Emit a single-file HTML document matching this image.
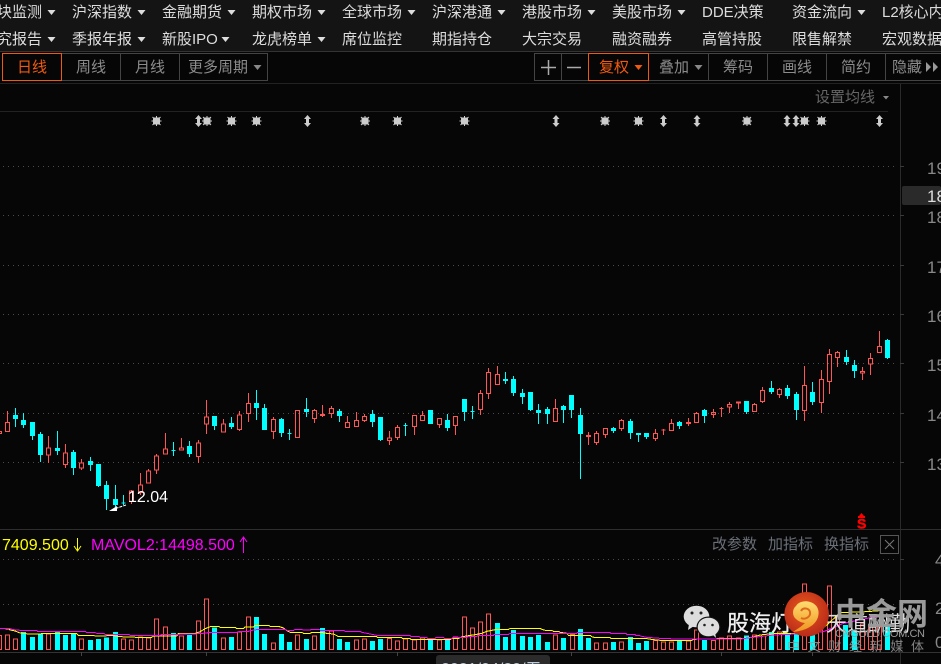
<!DOCTYPE html>
<html><head><meta charset="utf-8"><title>K线</title>
<style>
html,body{margin:0;padding:0;background:#060606}
#p{position:relative;width:941px;height:664px;overflow:hidden;background:#060606;font-family:"Liberation Sans","Noto Sans CJK SC",sans-serif}
#p div{position:absolute;white-space:nowrap}
.m{font-size:15px;color:#ddd;line-height:26px;height:26px}
.b{top:53px;height:28px;line-height:27px;font-size:15px;color:#8c8c8c;box-sizing:border-box;border:1px solid #444;text-align:center;margin-right:-1px}
.o{border-color:#f05a10;color:#f05a10;z-index:2}
svg{position:absolute;left:0;top:0}
</style></head><body><div id="p">
<div style="left:0;top:0;width:941px;height:51px;background:#141414"></div>
<div style="left:0;top:51px;width:941px;height:1px;background:#333"></div>
<div style="left:0;top:83px;width:941px;height:1px;background:#222"></div>

<div class="m" style="left:-18px;top:0">板块监测</div><div class="m" style="left:72px;top:0">沪深指数</div><div class="m" style="left:162px;top:0">金融期货</div><div class="m" style="left:252px;top:0">期权市场</div><div class="m" style="left:342px;top:0">全球市场</div><div class="m" style="left:432px;top:0">沪深港通</div><div class="m" style="left:522px;top:0">港股市场</div><div class="m" style="left:612px;top:0">美股市场</div><div class="m" style="left:702px;top:0">DDE决策</div><div class="m" style="left:792px;top:0">资金流向</div><div class="m" style="left:882px;top:0">L2核心内参</div>
<div class="m" style="left:-18px;top:27px">研究报告</div><div class="m" style="left:72px;top:27px">季报年报</div><div class="m" style="left:162px;top:27px">新股IPO</div><div class="m" style="left:252px;top:27px">龙虎榜单</div><div class="m" style="left:342px;top:27px">席位监控</div><div class="m" style="left:432px;top:27px">期指持仓</div><div class="m" style="left:522px;top:27px">大宗交易</div><div class="m" style="left:612px;top:27px">融资融券</div><div class="m" style="left:702px;top:27px">高管持股</div><div class="m" style="left:792px;top:27px">限售解禁</div><div class="m" style="left:882px;top:27px">宏观数据</div>

<div class="b o" style="left:2px;width:60px">日线</div><div class="b" style="left:61px;width:60px">周线</div><div class="b" style="left:120px;width:60px">月线</div><div class="b" style="left:179px;width:89px;text-align:left;padding-left:8px">更多周期</div>
<div class="b" style="left:534px;width:28px"></div><div class="b" style="left:561px;width:28px"></div><div class="b o" style="left:588px;width:61px;text-align:left;padding-left:10px">复权</div><div class="b" style="left:648px;width:61px;text-align:left;padding-left:10px">叠加</div><div class="b" style="left:708px;width:60px">筹码</div><div class="b" style="left:767px;width:60px">画线</div><div class="b" style="left:826px;width:60px">简约</div><div class="b" style="left:885px;width:70px;text-align:left;padding-left:6px">隐藏</div>

<div style="left:815px;top:85px;font-size:15px;line-height:26px;color:#666">设置均线</div>
<div style="left:0;top:111px;width:888px;height:1px;background:#222"></div>
<div style="left:0;top:529px;width:941px;height:1px;background:#2e2e2e"></div>
<div style="left:0;top:652px;width:941px;height:1px;background:#333"></div>

<svg width="941" height="664" viewBox="0 0 941 664">
<defs>
<radialGradient id="lg" cx=".45" cy=".4" r=".65"><stop offset="0" stop-color="#ea5a1c"/><stop offset="1" stop-color="#b5261a"/></radialGradient>
<linearGradient id="ly" x1="0" y1="0" x2="0" y2="1"><stop offset="0" stop-color="#ffdc70"/><stop offset="1" stop-color="#f0941f"/></linearGradient>
</defs>
<!-- arrows -->
<path fill="#ddd" d="M137.500 10h8l-4 5zM227.500 10h8l-4 5zM317.500 10h8l-4 5zM407.500 10h8l-4 5zM497.500 10h8l-4 5zM587.500 10h8l-4 5zM677.500 10h8l-4 5zM857.500 10h8l-4 5zM47.500 10h8l-4 5zM47.500 37h8l-4 5zM137.500 37h8l-4 5zM221.500 37h8l-4 5zM317.500 37h8l-4 5z"/>
<path fill="#888" d="M253.500 65h8l-4 5zM694.500 65h8l-4 5zM883 96h6l-3 3.500z"/>
<path fill="#f05a10" d="M634.500 65h8l-4 5z"/>
<path fill="#999" d="M926 62l5 5-5 5zM933 62l5 5-5 5z"/>
<path stroke="#aaa" stroke-width="1.500" fill="none" d="M541 67.500h15M548.500 60v15M567 67.500h14"/>
<!-- axis -->
<path stroke="#2a2a2a" fill="none" d="M900.500 84V664"/>
<path stroke="#3a3a3a" fill="none" d="M900 166.500h4M900 215.500h4M900 265.500h4M900 314.500h4M900 363.500h4M900 413.500h4M900 462.500h4M900 559.500h4M900 604.500h4"/>
<rect x="902" y="186" width="39" height="19" rx="2" fill="#2a2a2a"/>
<g font-family="Liberation Sans" font-size="17" fill="#888">
<text x="927" y="174">19</text><text x="927" y="202" fill="#ddd">18</text><text x="927" y="223">18</text><text x="927" y="273">17</text><text x="927" y="322">16</text><text x="927" y="371">15</text><text x="927" y="421">14</text><text x="927" y="470">13</text><text x="935" y="566">4</text><text x="935" y="614">2</text><text x="935" y="648">0</text>
</g>
<!-- dotted grid -->
<path stroke="#4a4a4a" fill="none" stroke-dasharray="1 4" d="M3 166.500H897M3 215.500H897M3 265.500H897M3 314.500H897M3 363.500H897M3 413.500H897M3 462.500H897M3 559.500H897M3 604.500H897"/>
<!-- markers -->
<path fill="#ccc" stroke="#ccc" stroke-width="1" d="M151.500 121h10M156.500 116v10M152.500 117l8 8M152.500 125l8-8M153.500 118h6v6h-6zM202 121h10M207 116v10M203 117l8 8M203 125l8-8M204 118h6v6h-6zM226.500 121h10M231.500 116v10M227.500 117l8 8M227.500 125l8-8M228.500 118h6v6h-6zM251.500 121h10M256.500 116v10M252.500 117l8 8M252.500 125l8-8M253.500 118h6v6h-6zM360 121h10M365 116v10M361 117l8 8M361 125l8-8M362 118h6v6h-6zM392.500 121h10M397.500 116v10M393.500 117l8 8M393.500 125l8-8M394.500 118h6v6h-6zM459.500 121h10M464.500 116v10M460.500 117l8 8M460.500 125l8-8M461.500 118h6v6h-6zM600 121h10M605 116v10M601 117l8 8M601 125l8-8M602 118h6v6h-6zM633.500 121h10M638.500 116v10M634.500 117l8 8M634.500 125l8-8M635.500 118h6v6h-6zM742 121h10M747 116v10M743 117l8 8M743 125l8-8M744 118h6v6h-6zM799.500 121h10M804.500 116v10M800.500 117l8 8M800.500 125l8-8M801.500 118h6v6h-6zM816.500 121h10M821.500 116v10M817.500 117l8 8M817.500 125l8-8M818.500 118h6v6h-6z"/>
<path fill="#ccc" d="M198.500 115l3.500 4h-2v4h2l-3.500 4l-3.500-4h2v-4h-2zM307.500 115l3.500 4h-2v4h2l-3.500 4l-3.500-4h2v-4h-2zM556 115l3.500 4h-2v4h2l-3.500 4l-3.500-4h2v-4h-2zM663.500 115l3.500 4h-2v4h2l-3.500 4l-3.500-4h2v-4h-2zM697 115l3.500 4h-2v4h2l-3.500 4l-3.500-4h2v-4h-2zM787 115l3.500 4h-2v4h2l-3.500 4l-3.500-4h2v-4h-2zM796 115l3.500 4h-2v4h2l-3.500 4l-3.500-4h2v-4h-2zM879.500 115l3.500 4h-2v4h2l-3.500 4l-3.500-4h2v-4h-2z"/>

<!-- candles -->
<g shape-rendering="crispEdges" stroke-width="3">
<g transform="translate(.167 380) scale(.33333)">
<path fill="none" stroke="#f55" d="M-8 154.500h12V160.500h-12zM22 93V126M16 127.500h12V154.500h-12zM145 168V202M145 227V249M139 203.500h12V225.500h-12zM196 192V217M196 255V264M190 218.500h12V253.500h-12zM244 237V247M244 266V270M238 248.500h12V264.500h-12zM394 330V331M394 366V372M388 332.500h12V364.500h-12zM421 279V313M421 339V345M415 314.500h12V337.500h-12zM445 267V271M439 272.500h12V309.500h-12zM469 222V226M469 272V282M463 227.500h12V270.500h-12zM496 159V205M490 206.500h12V222.500h-12zM544 174V203M538 204.500h12V210.500h-12zM595 180V187M595 231V249M589 188.500h12V229.500h-12zM619 60V109M619 134V162M613 110.500h12V132.500h-12zM670 117V130M664 131.500h12V156.500h-12zM718 93V103M718 150V153M712 104.500h12V148.500h-12z"/>
<path fill="#0ff" stroke="#0ff" d="M46 84V141M40 106.500h12V115.500h-12zM70 99V144M64 121.500h12V133.500h-12zM97 126V180M91 127.500h12V166.500h-12zM121 156V246M115 163.500h12V223.500h-12zM172 153V225M166 205.500h12V211.500h-12zM220 210V285M214 217.500h12V262.500h-12zM271 231V273M265 244.500h12V253.500h-12zM295 252V321M289 253.500h12V316.500h-12zM319 303V390M313 316.500h12V355.500h-12zM346 315V385M340 358.500h12V373.500h-12zM370 345V375M364 368.500h12M520 186V228M514 211.500h12M568 183V231M562 199.500h12V220.500h-12zM643 108V150M637 109.500h12V136.500h-12zM694 111V147M688 130.500h12V139.500h-12z"/>
</g>
<g transform="translate(240.167 360) scale(.33333)">
<path fill="none" stroke="#f55" d="M25 99V129M25 162V186M19 130.500h12V160.500h-12zM100 171V177M100 216V237M94 178.500h12V214.500h-12zM166 151.500h12V232.500h-12zM223 147V150M223 177V189M217 151.500h12V175.500h-12zM247 135V171M241 163.500h12V166.500h-12zM274 138V144M274 162V174M268 145.500h12V160.500h-12zM322 168V186M316 187.500h12V202.500h-12zM349 156V180M343 181.500h12V199.500h-12zM373 162V168M373 183V186M367 169.500h12V181.500h-12zM448 213V232M448 243V255M442 233.500h12V241.500h-12zM472 195V201M472 234V240M466 202.500h12V232.500h-12zM523 201V225M517 166.500h12V199.500h-12zM547 153V165M541 166.500h12V181.500h-12zM598 195V204M592 175.500h12V193.500h-12zM646 198V225M640 169.500h12V196.500h-12z"/>
<path fill="#0ff" stroke="#0ff" d="M49 90V180M43 130.500h12V142.500h-12zM73 132V210M67 145.500h12V208.500h-12zM124 174V231M118 178.500h12V217.500h-12zM148 207V240M142 220.500h12M199 114V171M193 148.500h12V154.500h-12zM298 147V186M292 154.500h12V166.500h-12zM397 150V201M391 163.500h12V184.500h-12zM421 171V243M415 172.500h12V238.500h-12zM496 189V228M490 196.500h12M565 151.500h12V190.500h-12zM622 162V213M616 181.500h12V202.500h-12zM673 117V183M667 118.500h12V154.500h-12zM697 138V177M691 154.500h12"/>
</g>
<g transform="translate(480.167 360) scale(.33333)">
<path fill="none" stroke="#f55" d="M1 90V99M1 150V165M-5 100.500h12V148.500h-12zM25 24V36M25 102V117M19 37.500h12V100.500h-12zM52 18V42M46 43.500h12V73.500h-12zM226 117V144M220 145.500h12V184.500h-12zM325 216V255M319 226.500h12V229.500h-12zM349 213V219M349 249V255M343 220.500h12V247.500h-12zM376 225V234M370 205.500h12V223.500h-12zM424 177V180M424 207V213M418 181.500h12V205.500h-12zM526 207V219M526 237V243M520 220.500h12V235.500h-12zM550 207V225M544 210.500h12M574 177V189M568 190.500h12V211.500h-12zM625 174V198M619 187.500h12V190.500h-12zM649 156V159M643 160.500h12V187.500h-12zM700 147V156M700 165V174M694 157.500h12V163.500h-12z"/>
<path fill="#0ff" stroke="#0ff" d="M76 36V72M70 58.500h12V61.500h-12zM100 48V108M94 58.500h12V97.500h-12zM127 87V132M121 100.500h12V109.500h-12zM151 96V153M145 97.500h12V148.500h-12zM175 132V192M169 151.500h12V157.500h-12zM202 141V192M196 148.500h12V160.500h-12zM250 135V189M244 139.500h12V148.500h-12zM274 105V174M268 106.500h12V148.500h-12zM301 144V357M295 166.500h12V220.500h-12zM400 201V219M394 205.500h12V211.500h-12zM451 177V237M445 184.500h12V217.500h-12zM475 219V246M469 220.500h12V223.500h-12zM499 219V237M493 220.500h12V229.500h-12zM598 183V207M592 187.500h12V196.500h-12zM673 147V189M667 151.500h12V166.500h-12z"/>
</g>
<g transform="translate(720.167 320) scale(.33333)">
<path fill="none" stroke="#f55" d="M4 261V291M-2 265.500h12M28 246V252M28 263V279M22 253.500h12V261.500h-12zM55 250V267M49 245.500h12V248.500h-12zM103 249V252M97 253.500h12V274.500h-12zM127 201V210M127 246V249M121 211.500h12V244.500h-12zM178 204V207M178 225V234M172 208.500h12V223.500h-12zM253 138V195M253 273V303M247 196.500h12V271.500h-12zM304 150V177M304 249V279M298 178.500h12V247.500h-12zM328 87V102M328 186V222M322 103.500h12V184.500h-12zM352 93V96M352 114V141M346 97.500h12V112.500h-12zM427 141V153M427 160V180M421 154.500h12V158.500h-12zM451 99V114M451 134V165M445 115.500h12V132.500h-12zM478 33V78M472 79.500h12V97.500h-12z"/>
<path fill="#0ff" stroke="#0ff" d="M79 243V282M73 244.500h12V274.500h-12zM154 183V222M148 205.500h12V214.500h-12zM202 195V237M196 205.500h12V226.500h-12zM229 216V300M223 223.500h12V268.500h-12zM277 186V255M271 217.500h12V244.500h-12zM379 90V135M373 112.500h12V124.500h-12zM403 120V174M397 136.500h12V151.500h-12zM502 57V117M496 61.500h12V112.500h-12z"/>
</g>
<!-- volume -->
<g transform="translate(.167 530) scale(.33333)">
<path fill="none" stroke="#f55" d="M-8 316.500h12V358.500h-12zM16 314.500h12V358.500h-12zM40 326.500h12V358.500h-12zM139 311.500h12V358.500h-12zM238 326.500h12V358.500h-12zM364 326.500h12V358.500h-12zM388 329.500h12V358.500h-12zM415 321.500h12V358.500h-12zM439 324.500h12V358.500h-12zM463 266.500h12V358.500h-12zM490 290.500h12V358.500h-12zM538 317.500h12V358.500h-12zM589 272.500h12V358.500h-12zM613 206.500h12V358.500h-12zM664 323.500h12V358.500h-12zM712 305.500h12V358.500h-12zM739 260.500h12V358.500h-12zM814 338.500h12V358.500h-12zM886 314.500h12V358.500h-12zM937 317.500h12V358.500h-12z"/>
<path fill="#0ff" stroke="#0ff" d="M64 307.500h12V358.500h-12zM91 322.500h12V358.500h-12zM115 311.500h12V358.500h-12zM166 306.500h12V358.500h-12zM190 316.500h12V358.500h-12zM214 311.500h12V358.500h-12zM265 331.500h12V358.500h-12zM289 328.500h12V358.500h-12zM313 324.500h12V358.500h-12zM340 307.500h12V358.500h-12zM514 310.500h12V358.500h-12zM562 316.500h12V358.500h-12zM637 293.500h12V358.500h-12zM688 322.500h12V358.500h-12zM763 262.500h12V358.500h-12zM787 313.500h12V358.500h-12zM838 313.500h12V358.500h-12zM862 337.500h12V358.500h-12zM913 328.500h12V358.500h-12z"/>
<polyline fill="none" stroke="#ff0" points="0,295 25,297 30,300 45,303 60,309 85,312 135,311 230,311 235,316 310,318 335,316 360,320 410,322 455,322 460,318 530,318 535,310 585,310 600,305 615,296 630,290 655,289 660,292 705,292 710,296 730,296 735,291 760,291 765,286 805,286 810,289 835,289 850,294 860,302 870,307 905,307 910,310 930,310 935,307 960,307"/>
<polyline fill="none" stroke="#f0f" points="0,296 30,296 40,299 60,301 110,301 112,304 255,304 260,308 285,308 290,310 310,310 315,313 385,313 390,316 480,316 485,313 530,313 600,311 625,308 655,307 710,307 720,304 745,304 760,300 780,298 855,298 860,301 880,301 885,298 905,298 908,300 930,300 935,298 960,298"/>
</g>
<g transform="translate(320.167 530) scale(.33333)">
<path fill="none" stroke="#f55" d="M28 302.500h12V358.500h-12zM103 329.500h12V358.500h-12zM127 326.500h12V358.500h-12zM202 325.500h12V358.500h-12zM226 332.500h12V358.500h-12zM250 326.500h12V358.500h-12zM277 330.500h12V358.500h-12zM301 324.500h12V358.500h-12zM352 330.500h12V358.500h-12zM400 320.500h12V358.500h-12zM427 260.500h12V358.500h-12zM451 293.500h12V358.500h-12zM475 275.500h12V358.500h-12zM499 251.500h12V358.500h-12zM700 314.500h12V358.500h-12zM751 313.500h12V358.500h-12zM823 338.500h12V358.500h-12zM850 338.500h12V358.500h-12zM898 335.500h12V358.500h-12z"/>
<path fill="#0ff" stroke="#0ff" d="M1 295.500h12V358.500h-12zM52 328.500h12V358.500h-12zM76 337.500h12V358.500h-12zM151 334.500h12V358.500h-12zM175 328.500h12V358.500h-12zM325 329.500h12V358.500h-12zM376 329.500h12V358.500h-12zM526 280.500h12V358.500h-12zM550 322.500h12V358.500h-12zM574 301.500h12V358.500h-12zM601 319.500h12V358.500h-12zM625 322.500h12V358.500h-12zM649 316.500h12V358.500h-12zM676 337.500h12V358.500h-12zM724 325.500h12V358.500h-12zM775 298.500h12V358.500h-12zM799 325.500h12V358.500h-12zM874 337.500h12V358.500h-12zM925 322.500h12V358.500h-12zM949 340.500h12V358.500h-12z"/>
<polyline fill="none" stroke="#ff0" points="0,307 20,310 40,312 50,317 55,320 170,320 172,323 245,323 247,326 270,326 272,329 390,329 395,325 415,325 428,320 445,317 465,314 485,310 500,304 515,301 530,298 565,298 570,295 660,295 665,298 675,301 695,301 700,304 715,304 720,307 740,310 745,316 810,316 815,320 825,323 870,323 872,326 960,326"/>
<polyline fill="none" stroke="#f0f" points="0,301 70,301 75,304 120,304 125,307 140,310 155,313 170,316 270,316 272,319 295,319 300,322 320,322 322,325 345,325 347,322 370,322 372,325 395,325 400,322 440,322 445,319 470,319 475,316 520,316 522,313 565,313 570,310 770,310 772,307 870,307 872,310 918,310 920,313 945,313 947,316 960,316"/>
</g>
<g transform="translate(640.167 530) scale(.33333)">
<path fill="none" stroke="#f55" d="M40 331.500h12V358.500h-12zM64 335.500h12V358.500h-12zM88 335.500h12V358.500h-12zM139 332.500h12V358.500h-12zM163 299.500h12V358.500h-12zM214 331.500h12V358.500h-12zM238 323.500h12V358.500h-12zM262 317.500h12V358.500h-12zM289 324.500h12V358.500h-12zM337 315.500h12V358.500h-12zM364 317.500h12V358.500h-12zM412 306.500h12V358.500h-12zM487 161.500h12V358.500h-12zM535 276.500h12V358.500h-12zM562 167.500h12V358.500h-12zM586 261.500h12V358.500h-12zM661 281.500h12V358.500h-12zM685 291.500h12V358.500h-12zM712 291.500h12V358.500h-12z"/>
<path fill="#0ff" stroke="#0ff" d="M13 334.500h12V358.500h-12zM112 331.500h12V358.500h-12zM187 331.500h12V358.500h-12zM313 317.500h12V358.500h-12zM388 307.500h12V358.500h-12zM436 310.500h12V358.500h-12zM463 311.500h12V358.500h-12zM511 316.500h12V358.500h-12zM610 286.500h12V358.500h-12zM637 301.500h12V358.500h-12zM736 290.500h12V358.500h-12z"/>
<polyline fill="none" stroke="#ff0" points="0,326 20,326 40,329 60,331 155,331 160,328 240,326 280,325 310,325 335,322 360,315 385,312 430,310 520,310 560,285 600,248 680,245 745,240"/>
<polyline fill="none" stroke="#f0f" points="0,318 20,322 60,325 110,327 300,327 340,322 400,315 470,312 550,305 610,280 680,265 745,258"/>
</g>
</g>
<!-- axis ticks -->
<path stroke="#444" fill="none" d="M81.500 652v4M206.500 652v4M397.500 652v4M571.500 652v4M721.500 652v4M812.500 652v4"/>
<g font-family="Liberation Sans" font-size="16" fill="#888"><text x="87" y="675">03</text><text x="212" y="675">03</text><text x="403" y="675">04</text><text x="577" y="675">05</text><text x="727" y="675">06</text><text x="819" y="675">07</text></g>
<path fill="#2b2b2b" d="M436 664V658a3 3 0 0 1 3-3H547a3 3 0 0 1 3 3V664z"/>
<text x="441" y="674" font-family="Liberation Sans,Noto Sans CJK SC,sans-serif" font-size="16" fill="#bcd">2021/04/20/五</text>

<!-- low marker -->
<path stroke="#fff" fill="none" stroke-dasharray="3 1" d="M126 505L114 509"/>
<path fill="#fff" d="M109 511l8-5v5z"/>
<text x="128" y="502" font-family="Liberation Sans" font-size="16" fill="#fff">12.04</text>
<!-- S marker -->
<path fill="#f00" d="M861.500 513l2.500 3h-5zM858 516h7v2h-7z"/>
<text x="857" y="528.500" font-family="Liberation Sans" font-weight="bold" font-size="14" fill="#f00" stroke="#f00" stroke-width=".5">S</text>

<!-- vol legend -->
<g font-family="Liberation Sans" font-size="16">
<text x="2" y="550" fill="#ff0">7409.500</text>
<text x="91" y="550" fill="#f0f">MAVOL2:14498.500</text>
</g>
<path stroke="#ff0" fill="none" d="M77.500 538v13M74 546l3.500 5 3.500-5"/>
<path stroke="#f0f" fill="none" d="M243.500 553V537M240 542l3.500-5 3.500 5"/>
<rect x="880.500" y="535.500" width="18" height="18" fill="none" stroke="#555"/>
<path stroke="#777" fill="none" d="M885 540l9 9M894 540l-9 9"/>

<!-- watermark -->
<ellipse cx="696.500" cy="616.500" rx="12.800" ry="10.800" fill="#ddd"/>
<path fill="#ddd" d="M689 624l-1 6 6-4z"/>
<circle cx="692" cy="613" r="1.500" fill="#222"/><circle cx="701" cy="613" r="1.500" fill="#222"/>
<ellipse cx="708.500" cy="627" rx="12" ry="10.500" fill="#111"/>
<ellipse cx="708.500" cy="627" rx="10.800" ry="9.300" fill="#ddd"/>
<path fill="#ddd" d="M712 634l4 4-1-6z"/>
<circle cx="704.500" cy="625" r="1.300" fill="#222"/><circle cx="712.500" cy="625" r="1.300" fill="#222"/>
<g font-family="Liberation Sans,Noto Sans CJK SC,sans-serif">
<text x="727" y="631" font-size="22" fill="#f0f0f0" stroke="#f0f0f0" stroke-width=".3" textLength="88">股海灯塔</text>
<text x="826" y="631" font-size="21" fill="#ddd">天道酬勤</text>
<text x="835" y="625" font-size="31" font-weight="bold" fill="#9a9a9a">中金网</text>
<text x="835" y="637" font-size="11" fill="#999" textLength="90">CNGOLD.COM.CN</text>
<text x="787" y="651" font-size="13" fill="#999" opacity=".85" textLength="137">中文财经新媒体</text>
</g>
<circle cx="806.700" cy="614.300" r="22.300" fill="url(#lg)"/>
<path fill="url(#ly)" d="M793 632C803 631 815 627 818 617C820 610 817 604 810 602C805 600 798 602 796 606C792 609 792 616 796 619C798 621 802 623 805 623C801 627 797 629 793 632Z"/>
<path fill="none" stroke="#dd6a1c" stroke-width="2" d="M801 611C803 607 809 608 810 612C811 617 805 620 801 618"/>
</svg>

<div style="left:712px;top:532px;font-size:15px;line-height:26px;color:#6a6f78">改参数</div>
<div style="left:768px;top:532px;font-size:15px;line-height:26px;color:#6a6f78">加指标</div>
<div style="left:824px;top:532px;font-size:15px;line-height:26px;color:#6a6f78">换指标</div>
</div></body></html>
